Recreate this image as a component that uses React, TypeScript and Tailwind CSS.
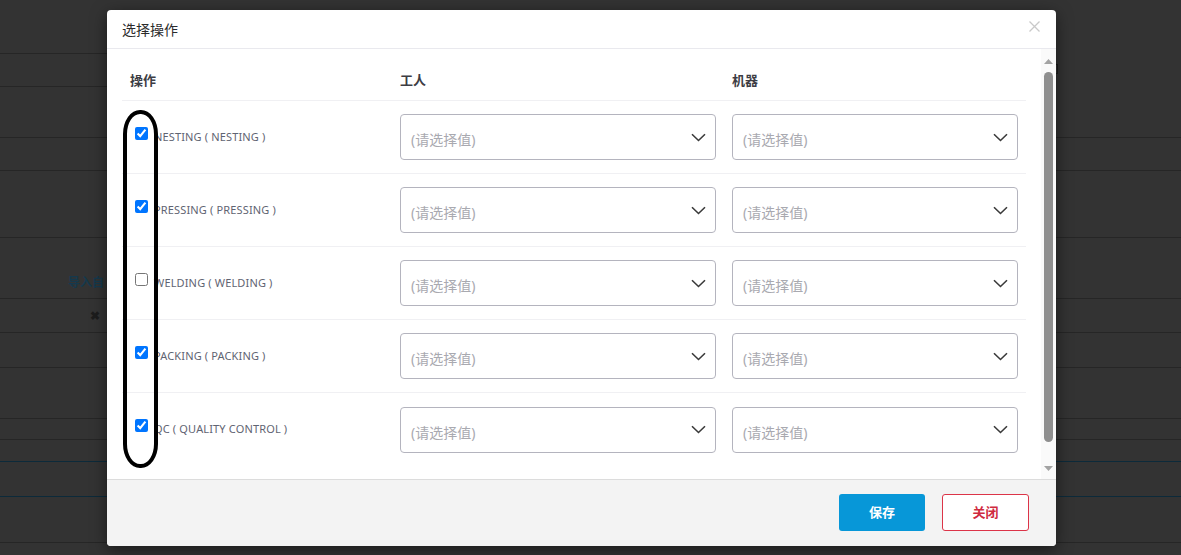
import React from "react";

const font = { fontFamily: '"Noto Sans", "Noto Sans CJK SC", sans-serif' };

const ops = [
  { label: "NESTING ( NESTING )", checked: true },
  { label: "PRESSING ( PRESSING )", checked: true },
  { label: "WELDING ( WELDING )", checked: false },
  { label: "PACKING ( PACKING )", checked: true },
  { label: "QC ( QUALITY CONTROL )", checked: true },
];

function Chevron() {
  return (
    <svg width="15" height="9" viewBox="0 0 15 9" fill="none">
      <path d="M1 1.2 L7.5 7.5 L14 1.2" stroke="#3a3a3a" strokeWidth="1.6" />
    </svg>
  );
}

function Select() {
  return (
    <div className="h-[46px] w-full rounded-[4px] border border-[#b4b4be] bg-white flex items-center justify-between pl-[10px] pr-[9px]">
      <span className="text-[14px] text-[#a9a9b0] pt-[5px]">(请选择值)</span>
      <Chevron />
    </div>
  );
}

export default function App() {
  return (
    <div className="relative w-[1181px] h-[555px] overflow-hidden bg-[#333333]" style={font}>
      {/* background page */}
      <div className="flex flex-col w-full">
        <div className="h-[54px] flex"><div className="w-[107px] border-b border-[#262626]" /></div>
        <div className="h-[33px] flex"><div className="w-[107px] border-b border-[#262626]" /></div>
        <div className="h-[51px] border-b border-[#262626] flex justify-end">
          <div className="mt-[-23px] mr-[123px] w-[3px] h-[10px] border border-[#1c1c1c]" />
        </div>
        <div className="h-[33px] border-b border-[#262626]" />
        <div className="h-[67px] border-b border-[#262626]" />
        <div className="h-[61px] border-b border-[#262626] flex items-end">
          <div className="w-[104px] text-right pb-[6px] text-[12px] font-bold text-[#15394d]">导入自</div>
        </div>
        <div className="h-[34px] border-b border-[#262626] flex items-center">
          <div className="w-[100px] text-right text-[12px] font-bold text-[#1c1c1c]">✖</div>
        </div>
        <div className="h-[35px] border-b border-[#262626]" />
        <div className="h-[51px] border-b border-[#262626]" />
        <div className="h-[21px] border-b border-[#262626]" />
        <div className="h-[22px] border-b border-[#0c2a3a]" />
        <div className="h-[35px] border-b border-[#0c2a3a]" />
        <div className="h-[46px] border-b border-[#262626]" />
      </div>

      {/* modal */}
      <div className="absolute left-[107px] top-[10px] w-[949px] h-[536px] bg-white rounded-[4px] shadow-[0_4px_16px_rgba(0,0,0,0.5)] flex flex-col overflow-hidden">
        <div className="h-[39px] border-b border-[#e9e9ee] flex items-center justify-between pl-[15px] pr-[15px] shrink-0">
          <span className="text-[14px] text-[#2b2b2b]">选择操作</span>
          <svg width="11" height="11" viewBox="0 0 11 11" className="mt-[-6px] mr-[1px]">
            <path d="M0.5 0.5 L10.5 10.5 M10.5 0.5 L0.5 10.5" stroke="#c9c9c9" strokeWidth="1.3" />
          </svg>
        </div>

        <div className="h-[430px] flex shrink-0">
          <div className="flex-1 px-[15px] pt-[14px]">
            <div className="h-[38px] flex items-center border-b border-[#f0f0f3] text-[13px] font-semibold text-[#3d3d44]">
              <div className="w-[270px] pl-[8px] pb-[2px]">操作</div>
              <div className="w-[332px] pl-[8px] pb-[2px]">工人</div>
              <div className="w-[302px] pl-[8px] pb-[2px]">机器</div>
            </div>
            {ops.map((op, i) => (
              <div key={i} className={"h-[73px] flex items-center " + (i < ops.length - 1 ? "border-b border-[#f0f0f3]" : "")}>
                <div className="w-[270px] pl-[8px] flex items-center">
                  <input
                    type="checkbox"
                    defaultChecked={op.checked}
                    className="w-[13px] h-[13px] ml-[5px] mb-[8px] shrink-0"
                  />
                  <span className="ml-[6px] text-[11px] tracking-[0.15px] text-[#5f6472]">{op.label}</span>
                </div>
                <div className="w-[332px] px-[8px]"><Select /></div>
                <div className="w-[302px] px-[8px]"><Select /></div>
              </div>
            ))}
          </div>
          {/* fake scrollbar */}
          <div className="w-[15px] bg-[#fafafa] flex flex-col items-center pt-[10px] pb-[8px]">
            <svg width="9" height="5" viewBox="0 0 9 5"><path d="M0 5 L4.5 0 L9 5 Z" fill="#a3a3a3" /></svg>
            <div className="mt-[8px] w-[9px] h-[370px] rounded-[5px] bg-[#8f8f8f]" />
            <div className="flex-1" />
            <svg width="9" height="5" viewBox="0 0 9 5"><path d="M0 0 L4.5 5 L9 0 Z" fill="#a3a3a3" /></svg>
          </div>
        </div>

        <div className="flex-1 bg-[#f3f3f3] border-t border-[#dcdcdc] flex justify-end items-start pt-[14px] pr-[27px] gap-[17px]">
          <button className="w-[86px] h-[37px] rounded-[3px] bg-[#0797d8] text-white text-[13px] font-bold">保存</button>
          <button className="w-[87px] h-[37px] rounded-[3px] bg-white border border-[#dc3448] text-[#cf2a3e] text-[13px] font-bold">关闭</button>
        </div>
      </div>

      {/* hand-drawn oval annotation */}
      <div className="absolute left-[123px] top-[110px] w-[35px] h-[358px] border-[4px] border-black rounded-[17px/24px]" />
    </div>
  );
}
